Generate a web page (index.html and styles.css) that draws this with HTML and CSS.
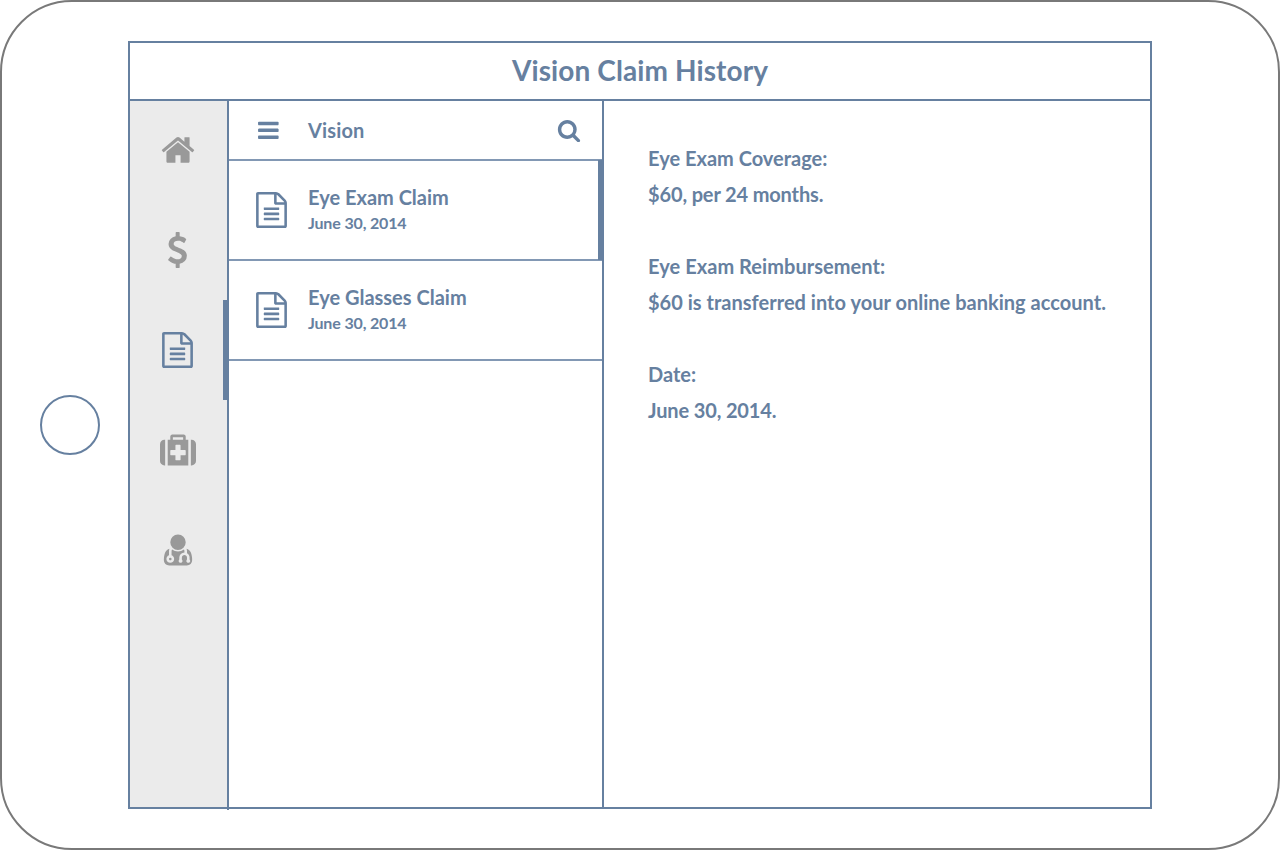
FILE: index.html
```html
<!DOCTYPE html>
<html lang="en">
<head>
<meta charset="utf-8">
<title>Vision Claim History</title>
<link rel="stylesheet" href="styles.css">
</head>
<body>
<svg class="defs" width="0" height="0" aria-hidden="true">
  <symbol id="home" viewBox="0 0 1792 1792"><path d="M1472 992v480q0 26-19 45t-45 19h-384v-384h-256v384h-384q-26 0-45-19t-19-45v-480q0-1 .5-3t.5-3l575-474 575 474q1 2 1 6zm223-69l-62 74q-8 9-21 11h-3q-13 0-21-7l-692-577-692 577q-12 8-24 7-13-2-21-11l-62-74q-8-10-7-23.5t11-21.5l719-599q32-26 76-26t76 26l244 204v-195q0-14 9-23t23-9h192q14 0 23 9t9 23v408l219 182q10 8 11 21.5t-7 23.5z"/></symbol>
  <symbol id="dollar" viewBox="25 0 1792 1792"><path d="M1362 1185q0 153-99.5 263.5t-258.5 136.5v175q0 14-9 23t-23 9h-135q-13 0-22.5-9.5t-9.5-22.5v-175q-66-9-127.5-31t-101.5-44.5-74-48-46.5-37.5-17.5-18q-17-21-2-41l103-135q7-10 23-12 15-2 24 9l2 2q113 99 243 125 37 8 74 8 81 0 142.5-43t61.5-122q0-28-15-53t-33.5-42-58.5-37.5-66-32-80-32.5q-39-16-61.5-25t-61.5-26.5-62.5-31-56.5-35.5-53.5-42.5-43.5-49-35.5-58-21-66.5-8.5-78q0-138 98-242t255-134v-180q0-13 9.5-22.5t22.5-9.5h135q14 0 23 9t9 23v176q57 6 110.5 23t87 33.5 63.5 37.5 39 29 15 14q17 18 5 38l-81 146q-8 15-23 16-14 3-27-7-3-3-14.5-12t-39-26.5-58.5-32-74.5-26-85.5-11.5q-95 0-155 43t-60 111q0 26 8.5 48t29.5 41.5 39.5 33 56 31 60.5 27 70 27.5q53 20 81 31.5t76 35 75.5 42.5 62 50 53 63.5 31.5 76.5 13 94z"/></symbol>
  <symbol id="file" viewBox="25 0 1792 1792"><path d="M1596 380q28 28 48 76t20 88v1152q0 40-28 68t-68 28h-1344q-40 0-68-28t-28-68v-1600q0-40 28-68t68-28h896q40 0 88 20t76 48zm-444-244v376h376q-10-29-22-41l-313-313q-12-12-41-22zm384 1528v-1024h-416q-40 0-68-28t-28-68v-416h-768v1536h1280zm-1024-864q0-14 9-23t23-9h704q14 0 23 9t9 23v64q0 14-9 23t-23 9h-704q-14 0-23-9t-9-23v-64zm736 224q14 0 23 9t9 23v64q0 14-9 23t-23 9h-704q-14 0-23-9t-9-23v-64q0-14 9-23t23-9h704zm0 256q14 0 23 9t9 23v64q0 14-9 23t-23 9h-704q-14 0-23-9t-9-23v-64q0-14 9-23t23-9h704z"/></symbol>
  <symbol id="medkit" viewBox="0 0 1792 1792"><path d="M1280 1120v-192q0-14-9-23t-23-9h-224v-224q0-14-9-23t-23-9h-192q-14 0-23 9t-9 23v224h-224q-14 0-23 9t-9 23v192q0 14 9 23t23 9h224v224q0 14 9 23t23 9h192q14 0 23-9t9-23v-224h224q14 0 23-9t9-23zm-640-736h512v-128h-512v128zm-384 0v1280h-32q-92 0-158-66t-66-158v-832q0-92 66-158t158-66h32zm1152 0v1280h-1024v-1280h128v-160q0-40 28-68t68-28h576q40 0 68 28t28 68v160h128zm384 224v832q0 92-66 158t-158 66h-32v-1280h32q92 0 158 66t66 158z"/></symbol>
  <symbol id="doctor" viewBox="0 0 1792 1792"><path d="M576 1344q0 26-19 45t-45 19-45-19-19-45 19-45 45-19 45 19 19 45zm1024 59q0 121-73 190t-194 69h-874q-121 0-194-69t-73-190q0-68 5.5-131t24-138 47.5-132.5 81-103 120-60.5q-22 52-22 120v203q-58 20-93 70t-35 111q0 80 56 136t136 56 136-56 56-136q0-61-35.5-111t-92.5-70v-203q0-62 25-93 132 104 295 104t295-104q25 31 25 93v64q-106 0-181 75t-75 181v89q-32 29-32 71 0 40 28 68t68 28 68-28 28-68q0-42-32-71v-89q0-52 38-90t90-38 90 38 38 90v89q-32 29-32 71 0 40 28 68t68 28 68-28 28-68q0-42-32-71v-89q0-68-34.5-127.5t-93.5-93.5q0-10 .5-42.5t0-48-2.5-41.5-7-47-13-40q68 15 120 60.5t81 103 47.5 132.5 24 138 5.5 131zm-320-891q0 159-112.5 271.5t-271.5 112.5-271.5-112.5-112.5-271.5 112.5-271.5 271.5-112.5 271.5 112.5 112.5 271.5z"/></symbol>
  <symbol id="bars" viewBox="-25 -25 1792 1792"><path d="M1664 1344v128q0 26-19 45t-45 19h-1408q-26 0-45-19t-19-45v-128q0-26 19-45t45-19h1408q26 0 45 19t19 45zm0-512v128q0 26-19 45t-45 19h-1408q-26 0-45-19t-19-45v-128q0-26 19-45t45-19h1408q26 0 45 19t19 45zm0-512v128q0 26-19 45t-45 19h-1408q-26 0-45-19t-19-45v-128q0-26 19-45t45-19h1408q26 0 45 19t19 45z"/></symbol>
  <symbol id="search" viewBox="0 -25 1792 1792"><path d="M1216 832q0-185-131.5-316.5t-316.5-131.5-316.5 131.5-131.5 316.5 131.5 316.5 316.5 131.5 316.5-131.5 131.5-316.5zm512 832q0 52-38 90t-90 38q-54 0-90-38l-343-342q-179 124-399 124-143 0-273.5-55.5t-225-150-150-225-55.5-273.5 55.5-273.5 150-225 225-150 273.5-55.5 273.5 55.5 225 150 150 225 55.5 273.5q0 220-124 399l343 343q37 37 37 90z"/></symbol>
</svg>
<div class="tablet">
  <div class="home-button"></div>
  <div class="screen">
    <header class="title-bar"><h1>Vision Claim History</h1></header>
    <div class="panes">
      <nav class="sidebar">
        <a class="nav-item"><svg class="icon"><use href="#home"/></svg></a>
        <a class="nav-item"><svg class="icon"><use href="#dollar"/></svg></a>
        <a class="nav-item active"><svg class="icon"><use href="#file"/></svg></a>
        <a class="nav-item"><svg class="icon"><use href="#medkit"/></svg></a>
        <a class="nav-item"><svg class="icon"><use href="#doctor"/></svg></a>
      </nav>
      <section class="list">
        <div class="list-head">
          <svg class="icon small menu"><use href="#bars"/></svg>
          <h2>Vision</h2>
          <svg class="icon small"><use href="#search"/></svg>
        </div>
        <div class="claim selected">
          <svg class="icon"><use href="#file"/></svg>
          <div class="claim-text"><h3>Eye Exam Claim</h3><p>June 30, 2014</p></div>
        </div>
        <div class="claim">
          <svg class="icon"><use href="#file"/></svg>
          <div class="claim-text"><h3>Eye Glasses Claim</h3><p>June 30, 2014</p></div>
        </div>
      </section>
      <main class="detail">
        <div class="entry"><p>Eye Exam Coverage:</p><p class="tight">$60, per 24 months.</p></div>
        <div class="entry"><p class="loose">Eye Exam Reimbursement:</p><p class="wide">$60 is transferred into your online banking account.</p></div>
        <div class="entry"><p>Date:</p><p class="tight">June 30, 2014.</p></div>
      </main>
    </div>
  </div>
</div>
</body>
</html>
```
FILE: styles.css
```css
:root {
  --blue: #6680a0;
  --rule: #8298b4;
  --gray: #999;
}

* { box-sizing: border-box; }

body {
  margin: 0;
  background: #fff;
  color: var(--blue);
  font-family: Lato, "Liberation Sans", sans-serif;
  font-weight: 700;
}

h1, h2, h3, p { margin: 0; font-weight: 700; }

.defs { display: block; height: 0; }

.tablet {
  width: 1280px;
  height: 850px;
  border: 2px solid #797979;
  border-radius: 72px;
  display: flex;
  align-items: center;
  padding-left: 38px;
}

.home-button {
  width: 60px;
  height: 60px;
  border: 2px solid var(--blue);
  border-radius: 50%;
  margin-right: 28px;
}

.screen {
  width: 1024px;
  height: 768px;
  border: 2px solid var(--blue);
  display: flex;
  flex-direction: column;
}

.title-bar {
  flex: none;
  height: 58px;
  border-bottom: 2px solid var(--blue);
  display: flex;
  align-items: center;
  justify-content: center;
  padding-bottom: 2px;
}

h1 { font-size: 28px; line-height: 34px; letter-spacing: 0.1px; }

.panes { flex: none; height: 706px; display: flex; }

.sidebar {
  width: 99px;
  height: 709px;
  background: linear-gradient(#ebebeb, #ebebeb) no-repeat 0 0 / 97px 706px;
  border-right: 2px solid var(--blue);
  color: var(--gray);
}

.nav-item {
  position: relative;
  height: 100px;
  display: flex;
  align-items: center;
  padding-left: 30px;
}

.nav-item:first-child { height: 99px; padding-bottom: 1px; }

.nav-item.active { color: var(--blue); }

.active::after, .selected::after {
  content: "";
  position: absolute;
  top: 0;
  right: -2px;
  width: 6px;
  height: 100px;
  background: var(--blue);
}

.icon { display: block; flex: none; width: 36px; height: 36px; fill: currentColor; }
.small { width: 24px; height: 24px; }

.list {
  width: 375px;
  border-right: 2px solid var(--blue);
}

.list-head {
  height: 60px;
  border-bottom: 2px solid var(--rule);
  display: flex;
  align-items: center;
  padding: 0 21px 0 27px;
}

.menu { margin-right: 28px; }

h2 { flex: 1; font-size: 20px; line-height: 24px; letter-spacing: 0.15px; }

.claim {
  position: relative;
  height: 100px;
  border-bottom: 2px solid var(--rule);
  display: flex;
  align-items: center;
  gap: 18px;
  padding-left: 25px;
}

.selected::after { top: -1px; }

.claim-text { padding-bottom: 2px; }

h3 { font-size: 20px; line-height: 26px; margin-bottom: 2px; }

.claim p { font-size: 16px; line-height: 22px; letter-spacing: -0.15px; }

.detail { flex: 1; padding: 39px 0 0 44px; }

.entry { font-size: 20px; line-height: 36px; margin-bottom: 36px; }

.loose { letter-spacing: 0.05px; }

.wide { letter-spacing: 0.02px; }

.tight { letter-spacing: -0.14px; }
```
